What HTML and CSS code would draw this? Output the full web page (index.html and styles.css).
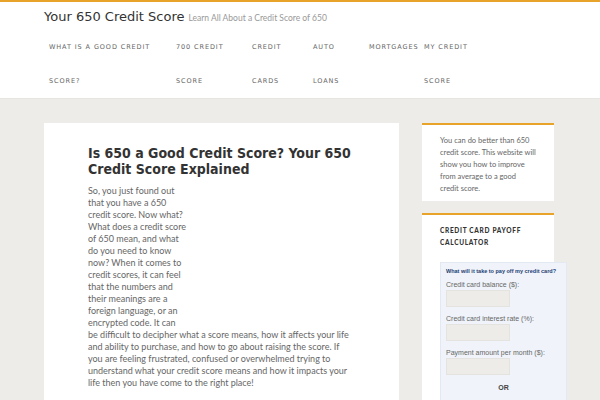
FILE: index.html
```html
<!DOCTYPE html>
<html>
<head>
<meta charset="utf-8">
<link rel="stylesheet" href="styles.css">
</head>
<body>
<header class="site-header">
  <div class="wrap">
    <div class="branding">
      <span class="site-title">Your 650 Credit Score</span>
      <span class="site-desc">Learn All About a Credit Score of 650</span>
    </div>
    <nav class="nav">
      <ul>
        <li class="n1">What is a Good Credit Score?</li>
        <li class="n2">700 Credit Score</li>
        <li class="n3">Credit Cards</li>
        <li class="n4">Auto Loans</li>
        <li class="n5">Mortgages</li>
        <li class="n6">My Credit Score</li>
      </ul>
    </nav>
  </div>
</header>
<div class="content-area">
  <div class="wrap cols">
    <main class="entry">
      <h1 class="entry-title">Is 650 a Good Credit Score? Your 650 Credit Score Explained</h1>
      <div class="entry-content">
        <div class="img-float"></div>
        <p>So, you just found out that you have a 650 credit score. Now what? What does a credit score of 650 mean, and what do you need to know now? When it comes to credit scores, it can feel that the numbers and their meanings are a foreign language, or an encrypted code. It can be difficult to decipher what a score means, how it affects your life and ability to purchase, and how to go about raising the score. If you are feeling frustrated, confused or overwhelmed trying to understand what your credit score means and how it impacts your life then you have come to the right place!</p>
      </div>
    </main>
    <aside class="sidebar">
      <section class="widget">
        <p class="widget-text">You can do better than 650 credit score. This website will show you how to improve from average to a good credit score.</p>
      </section>
      <section class="widget">
        <h4 class="widget-title">Credit Card Payoff Calculator</h4>
        <div class="calc">
          <div class="calc-title">What will it take to pay off my credit card?</div>
          <label class="calc-label">Credit card balance ($):</label>
          <div class="calc-input"></div>
          <label class="calc-label">Credit card interest rate (%):</label>
          <div class="calc-input"></div>
          <label class="calc-label">Payment amount per month ($):</label>
          <div class="calc-input"></div>
          <div class="calc-or">OR</div>
        </div>
      </section>
    </aside>
  </div>
</div>
</body>
</html>
```
FILE: styles.css
```css
html, body {
  margin: 0;
  padding: 0;
}
body {
  background: #edece8;
  font-family: "Lato", "Open Sans", sans-serif;
  color: #666;
  height: 400px;
  overflow: hidden;
}
.wrap {
  width: 512px;
  margin: 0 auto;
}
.site-header {
  background: #fff;
  border-top: 2px solid #e8a42a;
  border-bottom: 1px solid #e6e5e1;
}
.branding {
  height: 28px;
  display: flex;
  align-items: baseline;
  line-height: 30px;
}
.site-title {
  font-family: "DejaVu Sans", sans-serif;
  font-size: 13px;
  color: #333;
}
.site-desc {
  font-size: 8.5px;
  color: #999;
  margin-left: 4px;
}
.nav ul {
  list-style: none;
  margin: 0;
  padding: 0;
  display: flex;
}
.nav li {
  font-family: "DejaVu Sans", sans-serif;
  font-size: 6.5px;
  letter-spacing: 0.9px;
  text-transform: uppercase;
  color: #666;
  line-height: 34px;
  padding: 0 5px;
  box-sizing: border-box;
}
.n1 { width: 127px; }
.n2 { width: 76px; }
.n3 { width: 61px; }
.n4 { width: 56px; }
.n5 { width: 55px; }
.n6 { width: 60px; }
.content-area {
  padding-top: 24px;
}
.cols {
  display: flex;
  align-items: flex-start;
  gap: 23px;
}
.entry {
  width: 355px;
  background: #fff;
  padding: 22px 44px 30px;
  box-sizing: border-box;
}
.entry-title {
  font-family: "DejaVu Sans Condensed", "DejaVu Sans", sans-serif;
  font-stretch: condensed;
  font-weight: bold;
  font-size: 14px;
  line-height: 16px;
  color: #333;
  margin: 0 0 8px;
}
.entry-content p {
  margin: 0;
  font-size: 9px;
  line-height: 12px;
  color: #666;
}
.img-float {
  float: right;
  width: 160px;
  height: 138px;
  margin: 0 0 4px 8px;
}
.sidebar {
  width: 132px;
  display: flex;
  flex-direction: column;
  gap: 12px;
}
.widget {
  background: #fff;
  border-top: 2px solid #e8a42a;
  padding: 10px 18px 6px;
}
.widget-text {
  margin: 0;
  font-size: 7.5px;
  line-height: 12px;
  color: #666;
}
.widget-title {
  margin: 0 0 13px;
  font-family: "Lato", sans-serif;
  font-size: 6.5px;
  font-weight: 900;
  letter-spacing: 0.7px;
  text-transform: uppercase;
  line-height: 12px;
  color: #333;
}
.calc {
  width: 127px;
  box-sizing: border-box;
  background: #f0f4fa;
  border: 1px solid #e3e9f2;
  padding: 4px 5px 10px;
  font-family: "Liberation Sans", Arial, sans-serif;
}
.calc-title {
  font-size: 5.5px;
  font-weight: bold;
  color: #1d3d73;
  line-height: 8px;
  white-space: nowrap;
  margin-bottom: 5px;
}
.calc-label {
  display: block;
  font-size: 7px;
  color: #666;
  line-height: 10px;
}
.calc-input {
  width: 64px;
  height: 17px;
  background: #edece8;
  border: 1px solid #e4e3df;
  box-sizing: border-box;
  margin: 0 0 7px;
}
.calc-or {
  text-align: center;
  font-size: 7px;
  font-weight: bold;
  color: #444;
  line-height: 12px;
}
```
